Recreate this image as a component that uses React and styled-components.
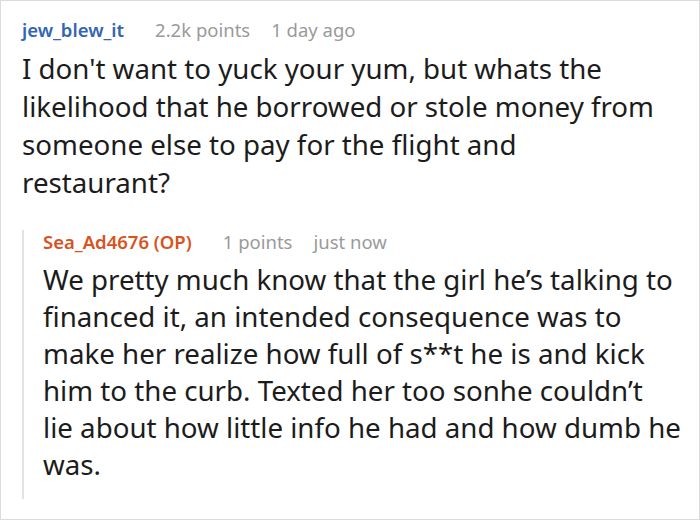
import React from 'react';
import styled, { createGlobalStyle } from 'styled-components';

const GlobalStyle = createGlobalStyle`
	html, body {
		margin: 0;
		padding: 0;
		background: #fff;
	}
`;

const Frame = styled.div`
	box-sizing: border-box;
	width: 700px;
	height: 520px;
	border: 1px solid #dcdcdc;
	padding: 17px 4px 0 21px;
	font-family: 'Noto Sans', 'Open Sans', sans-serif;
	overflow: hidden;
`;

const Meta = styled.div`
	display: flex;
	align-items: center;
	height: 24px;
	font-size: 18.5px;
	line-height: 24px;
`;

const Author = styled.span`
	font-weight: 600;
	color: ${(p) => (p.$op ? '#d9531e' : '#3465b4')};
	margin-right: 31px;
`;

const Info = styled.span`
	color: #9a9a9a;
	margin-right: ${(p) => (p.$gap ? '21px' : '0')};
`;

const Body = styled.p`
	margin: 7px 0 0;
	font-size: 27.7px;
	line-height: ${(p) => p.$lh || 38}px;
	color: #1c1c1c;
`;

const Line = styled.span`
	display: block;
	white-space: nowrap;
`;

const Reply = styled.div`
	margin-top: 29px;
	border-left: 2px solid #e3e3e3;
	padding: 0 0 16px 19px;
`;

const Comment = ({ author, op, points, time, lines, lh }) => (
	<>
		<Meta>
			<Author $op={op}>{author}</Author>
			<Info $gap>{points}</Info>
			<Info>{time}</Info>
		</Meta>
		<Body $lh={lh}>
			{lines.map((l) => (
				<Line key={l}>{l}</Line>
			))}
		</Body>
	</>
);

const parent = [
	"I don't want to yuck your yum, but whats the",
	'likelihood that he borrowed or stole money from',
	'someone else to pay for the flight and',
	'restaurant?',
];

const reply = [
	'We pretty much know that the girl he’s talking to',
	'financed it, an intended consequence was to',
	'make her realize how full of s**t he is and kick',
	'him to the curb. Texted her too sonhe couldn’t',
	'lie about how little info he had and how dumb he',
	'was.',
];

export default function App() {
	return (
		<Frame>
			<GlobalStyle />
			<Comment author='jew_blew_it' points='2.2k points' time='1 day ago' lines={parent} />
			<Reply>
				<Comment author='Sea_Ad4676 (OP)' op points='1 points' time='just now' lines={reply} lh={37} />
			</Reply>
		</Frame>
	);
}
